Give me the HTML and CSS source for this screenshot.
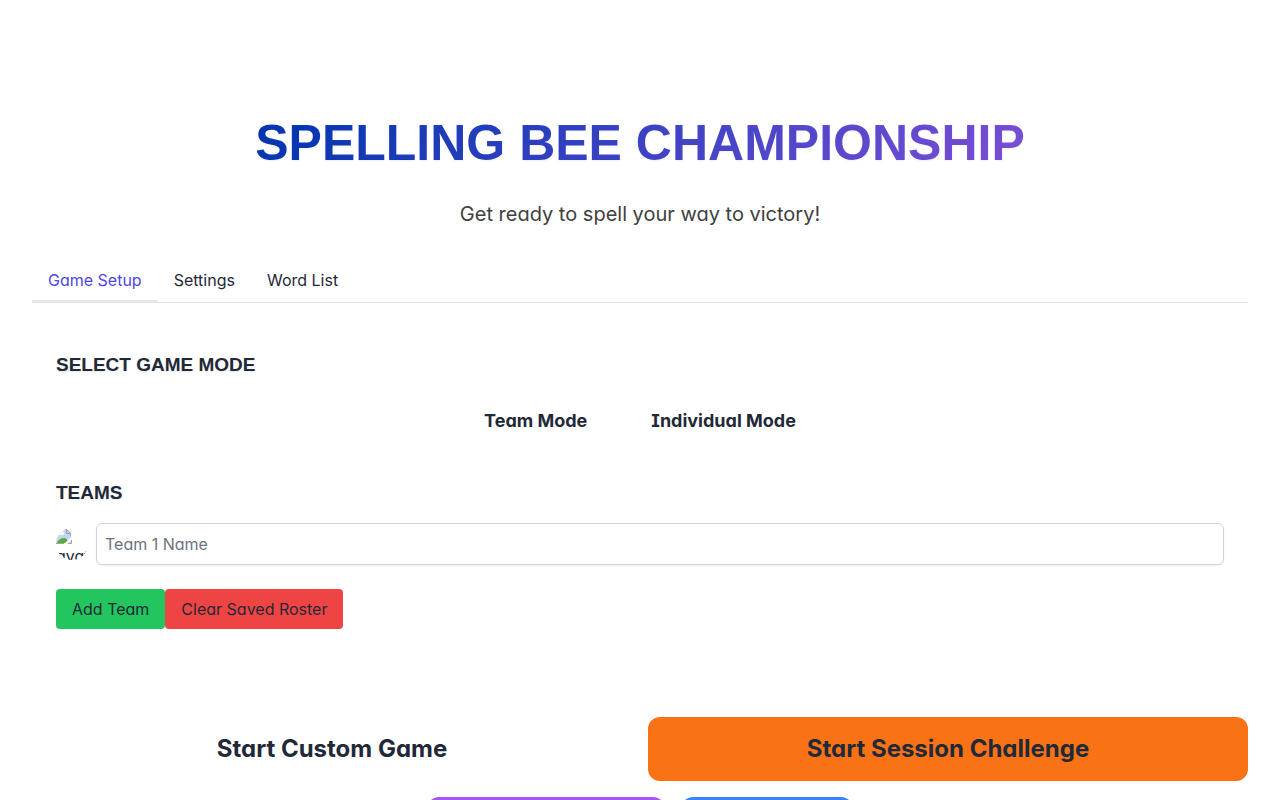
FILE: index.html
```html
<!DOCTYPE html>
<html lang="en">
<head>
<meta charset="utf-8">
<meta name="viewport" content="width=device-width, initial-scale=1">
<title>Spelling Bee Championship</title>
<link rel="stylesheet" href="styles.css">
</head>
<body>
<main class="page">
  <header class="hero">
    <h1 class="hero-title">SPELLING BEE CHAMPIONSHIP</h1>
    <p class="hero-text">Get ready to spell your way to victory!</p>
  </header>
  <nav class="tabs">
    <button class="tab tab-active" type="button">Game Setup</button>
    <button class="tab" type="button">Settings</button>
    <button class="tab" type="button">Word List</button>
  </nav>
  <section class="panel">
    <h2 class="heading">SELECT GAME MODE</h2>
    <div class="modes">
      <button class="mode" type="button">Team Mode</button>
      <button class="mode" type="button">Individual Mode</button>
    </div>
  </section>
  <section class="panel panel-teams">
    <h2 class="heading">TEAMS</h2>
    <div class="team">
      <div class="avatar">
        <svg class="avatar-icon" width="16" height="16" viewBox="0 0 16 16" aria-hidden="true">
          <path d="M0 1h11l4 4v10H0z" fill="#c3d5f7"/>
          <path d="M3 7q0-2 2-2 1-2 3-1 1 1 0 3z" fill="#f4f8ff"/>
          <path d="M1 15q2-5 7-5 3 0 5 5z" fill="#55ad35"/>
          <path d="M8 16 16 8v3l-4 5z" fill="#fff"/>
          <path d="M10.500 1.500v4h4M10.500 1.500l4 4v3M15.500 12v3.500H12M0 15.500h8M0 1.500h10.500" fill="none" stroke="#a0a0a0" stroke-width="1"/>
        </svg>
        <span class="avatar-text">avatar</span>
      </div>
      <input class="team-name" type="text" placeholder="Team 1 Name" aria-label="Team 1 Name">
    </div>
    <div class="team-actions">
      <button class="button button-add" type="button">Add Team</button>
      <button class="button button-clear" type="button">Clear Saved Roster</button>
    </div>
  </section>
  <div class="starts">
    <button class="start" type="button">Start Custom Game</button>
    <button class="start start-session" type="button">Start Session Challenge</button>
  </div>
  <div class="links">
    <button class="link link-purple" type="button"></button>
    <button class="link link-blue" type="button"></button>
  </div>
</main>
</body>
</html>
```
FILE: styles.css
```css
* {
  box-sizing: border-box;
}

body {
  margin: 0;
  background: #fff;
  color: #1f2937;
  font-family: Inter, "Liberation Sans", sans-serif;
  font-size: 16px;
  line-height: 24px;
  font-feature-settings: "cv11", "cv08";
}

button,
input {
  margin: 0;
  border: 0;
  background: none;
  color: inherit;
  font: inherit;
  font-feature-settings: inherit;
}

button {
  cursor: pointer;
}

.page {
  padding: 112px 32px 32px;
}

.hero {
  text-align: center;
}

.hero-title {
  width: fit-content;
  margin: 0 auto;
  background: linear-gradient(135deg, #0038b8, #4648d0 55%, #8453e3);
  background-clip: text;
  -webkit-background-clip: text;
  color: transparent;
  font-family: "Liberation Sans", sans-serif;
  font-size: 50px;
  font-weight: 700;
  line-height: 62px;
  text-shadow: 0 1px 2px rgba(0, 0, 0, 0.06);
}

.hero-text {
  margin: 24px 0 30px;
  color: #404040;
  font-size: 20px;
  line-height: 32px;
}

.tabs {
  display: flex;
  align-items: flex-start;
  border-bottom: 1px solid #e5e7eb;
}

.tab {
  padding: 8px 16px;
  margin-bottom: -1px;
}

.tab-active {
  border-bottom: 3px solid #e5e7eb;
  color: #4f46e5;
}

.panel {
  padding: 48px 24px 0;
}

.panel-teams {
  padding-top: 32px;
}

.heading {
  margin: 0 0 16px;
  font-family: "Liberation Sans", sans-serif;
  font-size: 19px;
  font-weight: 700;
  line-height: 28px;
  text-shadow: 0 1px 2px rgba(0, 0, 0, 0.1);
}

.modes {
  display: flex;
  justify-content: center;
}

.mode {
  padding: 12px 32px;
  font-size: 18px;
  font-weight: 700;
  line-height: 28px;
}

.team {
  display: flex;
  align-items: center;
  gap: 8px;
}

.avatar {
  flex: none;
  width: 32px;
  height: 32px;
  overflow: hidden;
  border-radius: 50%;
}

.avatar-icon {
  display: block;
}

.avatar-text {
  display: block;
}

.team-name {
  flex: 1;
  min-width: 0;
  padding: 8px;
  border: 1px solid #d1d5db;
  border-radius: 6px;
  background: #fff;
  box-shadow: 0 1px 2px rgba(0, 0, 0, 0.06);
}

.team-name::placeholder {
  color: #6b7280;
  opacity: 1;
}

.team-actions {
  display: flex;
  margin-top: 24px;
}

.button {
  padding: 8px 16px;
  border-radius: 4px;
}

.button-add {
  background: #22c55e;
}

.button-clear {
  background: #ef4444;
}

.starts {
  display: grid;
  grid-template-columns: 1fr 1fr;
  gap: 16px;
  margin-top: 88px;
}

.start {
  padding: 16px;
  border-radius: 12px;
  font-size: 24px;
  font-weight: 700;
  line-height: 32px;
}

.start-session {
  background: #f97316;
}

.links {
  display: flex;
  justify-content: center;
  gap: 16px;
  margin-top: 16px;
}

.link {
  min-height: 52px;
  border-radius: 12px;
}

.link-purple {
  min-width: 238px;
  background: #a855f7;
}

.link-blue {
  min-width: 172px;
  background: #3b82f6;
}
```
